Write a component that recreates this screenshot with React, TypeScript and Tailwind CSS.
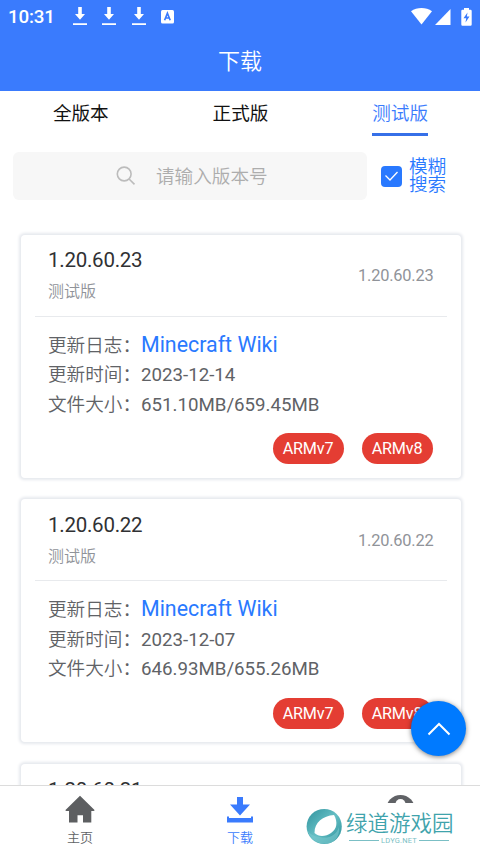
import { useState } from 'react';
import clsx from 'clsx';

const tabs = ['全版本', '正式版', '测试版'];

const versions = [
    { version: '1.20.60.23', type: '测试版', date: '2023-12-14', size: '651.10MB/659.45MB' },
    { version: '1.20.60.22', type: '测试版', date: '2023-12-07', size: '646.93MB/655.26MB' },
    { version: '1.20.60.21', type: '测试版', date: '2023-11-30', size: '646.80MB/655.12MB' },
];

function StatusDownload() {
    return (
        <svg width="14" height="19" viewBox="0 0 14 19" fill="#fff">
            <path d="M5.2 0h3.6v7H12l-5 5.8L2 7h3.2zM0 16.2h14V18H0z" />
        </svg>
    );
}

function StatusBar() {
    return (
        <div className="flex h-[33px] items-center justify-between pl-2 pr-2 text-white">
            <div className="flex items-center">
                <span className="w-[65px] pt-px text-[18.8px] font-medium tracking-[-0.2px]">10:31</span>
                <div className="flex items-center gap-[15.3px]">
                    <StatusDownload />
                    <StatusDownload />
                    <StatusDownload />
                    <svg width="14" height="14" viewBox="0 0 14 14">
                        <rect width="13" height="13.5" rx="1.5" fill="#fff" />
                        <path d="M3.6 10.2 6.4 3.2l2.8 7M4.6 8h3.6" fill="none" stroke="#3a7bfd" strokeWidth="1.7" />
                    </svg>
                </div>
            </div>
            <div className="flex items-center">
                <svg width="21" height="17" viewBox="0 0 21 17" fill="#fff">
                    <path d="M0 3.3C6-1 15-1 21 3.3L10.5 16.6z" />
                </svg>
                <svg className="ml-[3px]" width="16" height="16" viewBox="0 0 16 16" fill="#fff">
                    <path d="M15.5 0v16H0z" />
                </svg>
                <svg className="ml-[10px]" width="11" height="18" viewBox="0 0 11 18">
                    <path d="M3 0h5v1.7h1.5q1.2 0 1.2 1.2v13.6q0 1.2-1.2 1.2h-8q-1.2 0-1.2-1.2V2.900q0-1.200 1.200-1.200H3z" fill="#fff" />
                    <path d="M6.5 4.500 2.500 10.300h2.700L4.500 14.600 8.500 8.600H5.900z" fill="#3a7bfd" />
                </svg>
            </div>
        </div>
    );
}

function VersionCard({ item }: { item: typeof versions[number] }) {
    return (
        <div className="h-[243px] shrink-0 rounded bg-white px-[14px] shadow-[0_0_3px_1.5px_#e6e9ee]">
            <div className="flex h-[82px] items-center justify-between border-b border-[#e8eaed] px-[13px]">
                <div>
                    <div className="pt-[3px] text-[20.5px] leading-[30px] tracking-[-0.25px] text-[#303133]">{item.version}</div>
                    <div className="pt-px text-[16px] font-[350] leading-[32px] text-[#909399]">{item.type}</div>
                </div>
                <span className="pt-[3px] text-[16.4px] tracking-[-0.2px] text-[#909399]">{item.version}</span>
            </div>
            <div className="px-[13px] pt-[14px] text-[18.6px] leading-[29.6px] text-[#606266]">
                <div className="flex h-[29.6px]">
                    <span className="pt-px font-[350]">更新日志：</span>
                    <a className="text-[21.4px] leading-[28px] text-[#2979ff]">Minecraft Wiki</a>
                </div>
                <div className="flex h-[29.6px]">
                    <span className="pt-px font-[350]">更新时间：</span>
                    <span className="pt-px text-[18.7px]">{item.date}</span>
                </div>
                <div className="flex h-[29.6px]">
                    <span className="pt-px font-[350]">文件大小：</span>
                    <span className="pt-px text-[18.7px]">{item.size}</span>
                </div>
                <div className="mr-px mt-[14px] flex justify-end gap-[18px]">
                    {['ARMv7', 'ARMv8'].map(arch => (
                        <button key={arch} className="h-[31px] w-[71px] rounded-full bg-[#e43d33] text-[16.2px] leading-[31px] tracking-[-0.2px] text-white">
                            {arch}
                        </button>
                    ))}
                </div>
            </div>
        </div>
    );
}

function Watermark() {
    return (
        <div className="absolute left-[302px] top-[17px] flex h-[46px] w-[158px] items-center bg-white pl-1">
            <svg width="37" height="37" viewBox="0 0 37 37">
                <defs>
                    <linearGradient id="ring" x1="0" y1="0" x2="1" y2="1">
                        <stop offset="0" stopColor="#2f929d" />
                        <stop offset="0.5" stopColor="#66bfc5" />
                        <stop offset="1" stopColor="#278e98" />
                    </linearGradient>
                </defs>
                <circle cx="18.2" cy="18.5" r="17.6" fill="url(#ring)" />
                <path d="M1 20C3 31 12 37 22 35.5 30 34 34 27 33 19 30 28 22 31 14 29 6 28 2 25 1 20z" fill="#7cc9ce" opacity="0.6" />
                <path d="M8.500 25C8.500 14 17 8 28 7c4 7 3 14-3 18-5 3.500-12 4.500-16.500 0z" fill="#fff" />
            </svg>
            <div className="ml-[3px] w-[110px] pt-[3px]">
                <div className="whitespace-nowrap text-[21.5px] font-[350] leading-[25px] text-[#3fa3ac]">绿道游戏园</div>
                <div className="flex h-[9px] items-center gap-[2px] text-[7.5px] leading-[9px] text-[#7bbfc5]">
                    <span className="ml-[3px] h-px w-[30px] bg-[#7bbfc5]" />
                    <span className="w-[36px] text-center tracking-[0.2px]">LDYG.NET</span>
                    <span className="h-px w-[30px] bg-[#7bbfc5]" />
                </div>
            </div>
        </div>
    );
}

export default function App() {
    const [activeTab, setActiveTab] = useState('测试版');
    const [fuzzy, setFuzzy] = useState(true);

    return (
        <div className="relative flex h-[853px] w-[480px] flex-col overflow-hidden bg-white font-['Roboto','Noto_Sans_CJK_SC',sans-serif]">
            <header className="h-[91px] shrink-0 bg-[#3a7bfd]">
                <StatusBar />
                <h1 className="text-center text-[22px] font-[350] leading-[57px] text-white">下载</h1>
            </header>

            <nav className="grid h-[45px] shrink-0 grid-cols-3 justify-items-center pl-px">
                {tabs.map(tab => (
                    <button
                        key={tab}
                        onClick={() => setActiveTab(tab)}
                        className={clsx(
                            'h-[45px] border-b-[3px] pt-[5px] text-[18.6px] leading-[37px]',
                            activeTab === tab ? 'border-[#3670e8] font-[350] text-[#3a7bfd]' : 'border-transparent text-[#111]'
                        )}
                    >
                        {tab}
                    </button>
                ))}
            </nav>

            <div className="mt-4 flex h-12 shrink-0 items-center pl-[13px]">
                <div className="flex h-12 w-[354px] items-center rounded-md bg-[#f7f7f7] pl-[103px] text-[#adadad]">
                    <svg width="20" height="20" viewBox="0 0 20 20" fill="none" stroke="#bcbcbc" strokeWidth="1.6">
                        <circle cx="8.2" cy="8" r="6.9" />
                        <path d="m13.1 13 5.400 5.400" />
                    </svg>
                    <span className="ml-5 pt-1 text-[18.6px] font-[350]">请输入版本号</span>
                </div>
                <button onClick={() => setFuzzy(!fuzzy)} className="ml-[14px] flex items-center gap-[7px] text-[#2979ff]">
                    <span className="flex h-[21px] w-[21px] items-center justify-center rounded bg-[#2979ff]">
                        {fuzzy && (
                            <svg width="15" height="12" viewBox="0 0 15 12" fill="none" stroke="#fff" strokeWidth="1.3">
                                <path d="m1.5 5.500 4.500 4.500L13.500 2" />
                            </svg>
                        )}
                    </span>
                    <span className="w-[38px] text-left text-[18.6px] font-[350] leading-[18.5px]">模糊搜索</span>
                </button>
            </div>

            <main className="flex min-h-0 flex-1 flex-col gap-[21.8px] overflow-hidden pl-[21px] pr-[19.5px] pt-[34.5px]">
                {versions.map(item => (
                    <VersionCard key={item.version} item={item} />
                ))}
            </main>

            <button className="absolute left-[411px] top-[701px] flex h-[55px] w-[55px] items-center justify-center rounded-full bg-[#007aff] shadow-[0_1px_5px_rgba(0,0,0,0.5)]">
                <svg width="24" height="14" viewBox="0 0 24 14" fill="none" stroke="#fff" strokeWidth="2">
                    <path d="M1.5 12.500 12 2l10.500 10.500" />
                </svg>
            </button>

            <footer className="relative grid h-[68px] shrink-0 grid-cols-3 border-t border-[#dcdcdc] bg-white text-[13px] leading-[18px]">
                <div className="flex flex-col items-center pt-[9px] text-[#606266]">
                    <svg width="30" height="29" viewBox="0 0 30 29" fill="#5d5f61">
                        <path d="M15 .8 29.5 15q.2 1-1 1h-2.200v11.500H18v-7.200h-5.500v7.200H4V16H1.500Q.2 16 .5 15z" />
                    </svg>
                    <span className="mt-[5px] font-[350]">主页</span>
                </div>
                <div className="flex flex-col items-center pt-[9px] text-[#3a7bfd]">
                    <svg width="28" height="29" viewBox="0 0 28 29" fill="#3a7bfd">
                        <path d="M11 2h6v7.500h7L14 20.500 4 9.500h7zM1 21.500h2V23h22v-1.500h2v6H1z" />
                    </svg>
                    <span className="mt-[5px] font-[350]">下载</span>
                </div>
                <div className="flex flex-col items-center pt-[9px]">
                    <svg width="29" height="29" viewBox="0 0 29 29">
                        <circle cx="14.5" cy="14.5" r="14.5" fill="#606266" />
                        <circle cx="14.5" cy="9" r="5" fill="#fff" />
                    </svg>
                </div>
                <Watermark />
            </footer>
        </div>
    );
}
